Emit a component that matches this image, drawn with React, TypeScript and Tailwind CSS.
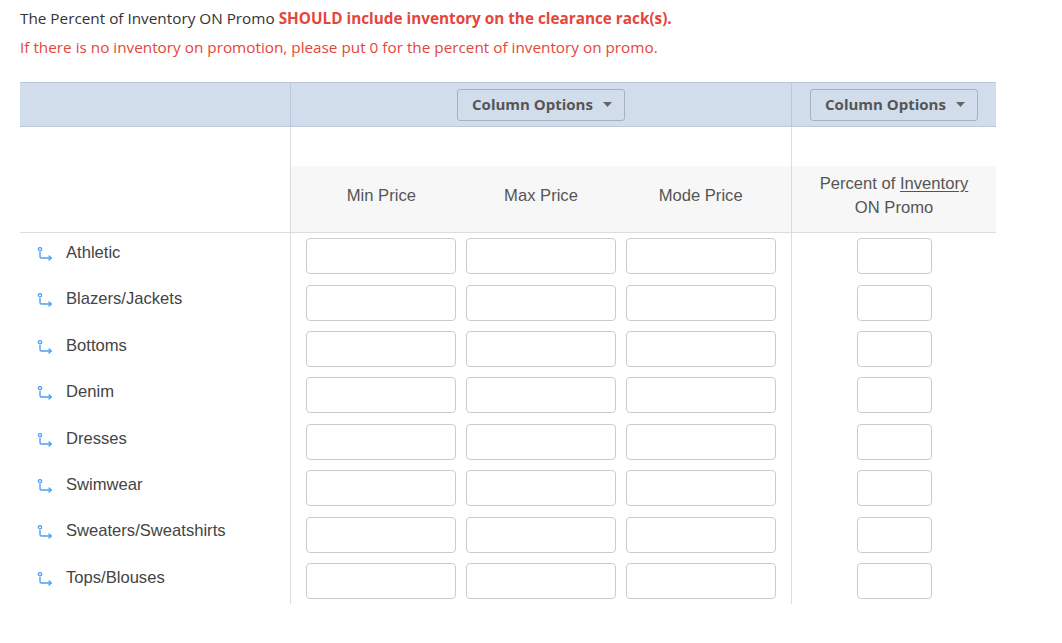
import React from "react";

const rows = [
  "Athletic",
  "Blazers/Jackets",
  "Bottoms",
  "Denim",
  "Dresses",
  "Swimwear",
  "Sweaters/Sweatshirts",
  "Tops/Blouses",
];

function SubIcon() {
  return (
    <svg width="16" height="14" viewBox="0 0 16 14" fill="none" className="shrink-0">
      <circle cx="3" cy="2.2" r="1.6" stroke="#4a9ff5" strokeWidth="1.3" />
      <path d="M3 5.5 V9.5 Q3 11 4.5 11 H14" stroke="#4a9ff5" strokeWidth="1.4" strokeLinecap="round" />
      <path d="M12 9 L14.2 11 L12 13" stroke="#4a9ff5" strokeWidth="1.4" strokeLinecap="round" strokeLinejoin="round" />
    </svg>
  );
}

function ColBtn() {
  return (
    <button className="flex h-[32px] w-[168px] items-center justify-center gap-[10px] rounded-[3px] border border-[#a8b2bf] bg-[#d2ddec] pl-[2px] text-[15px] font-bold text-[#555555] [font-family:'Open_Sans',sans-serif]">
      <span>Column Options</span>
      <svg width="9" height="5" viewBox="0 0 9 5"><path d="M0 0 H9 L4.5 5 Z" fill="#666" /></svg>
    </button>
  );
}

function Box({ w }: { w: string }) {
  return <div className={`h-[36px] ${w} rounded-[4px] border border-[#cccccc] bg-white`} />;
}

export default function App() {
  return (
    <div className="min-h-screen bg-white pt-[8px] [font-family:'Liberation_Sans',Arial,sans-serif]">
      <div className="pl-[20px] [font-family:'Open_Sans',sans-serif] text-[15.3px]">
        <p className="leading-[21px] text-[#333333]">
          The Percent of Inventory ON Promo{" "}
          <span className="font-bold text-[#e5463b]">SHOULD include inventory on the clearance rack(s).</span>
        </p>
        <p className="mt-[8px] leading-[21px] text-[#e5463b]">
          If there is no inventory on promotion, please put 0 for the percent of inventory on promo.
        </p>
      </div>

      <div className="ml-[20px] mt-[24px] w-[976px]">
        {/* header band */}
        <div className="grid h-[45px] grid-cols-[270px_501px_205px] border-y border-[#b9c8dc] bg-[#d2ddec]">
          <div />
          <div className="flex items-center justify-center border-l border-[#b9c8dc]">
            <ColBtn />
          </div>
          <div className="flex items-center justify-center border-l border-[#b9c8dc]">
            <ColBtn />
          </div>
        </div>

        {/* column headers */}
        <div className="grid grid-cols-[270px_501px_205px] border-b border-[#dddddd]">
          <div />
          <div className="border-l border-[#dddddd]">
            <div className="h-[39px]" />
            <div className="grid h-[66px] grid-cols-3 bg-[#f7f7f7] px-[10.5px] pb-[6px] text-[16.6px] text-[#555555]">
              <div className="flex items-center justify-center">Min Price</div>
              <div className="flex items-center justify-center">Max Price</div>
              <div className="flex items-center justify-center">Mode Price</div>
            </div>
          </div>
          <div className="border-l border-[#dddddd]">
            <div className="h-[39px]" />
            <div className="flex h-[66px] flex-col items-center justify-center bg-[#f7f7f7] pb-[6px] text-center text-[16.6px] leading-[24px] text-[#555555]">
              <div>
                Percent of <span className="underline underline-offset-2">Inventory</span>
              </div>
              <div>ON Promo</div>
            </div>
          </div>
        </div>

        {/* rows */}
        <div className="grid grid-cols-[270px_501px_205px]">
          <div>
            {rows.map((r) => (
              <div key={r} className="flex h-[46.4px] items-start gap-[13px] pl-[17px] pt-[10px]">
                <div className="pt-[4px]">
                  <SubIcon />
                </div>
                <span className="text-[16.6px] leading-[20px] text-[#444444]">{r}</span>
              </div>
            ))}
          </div>
          <div className="border-l border-[#dddddd] px-[10.5px]">
            {rows.map((r) => (
              <div key={r} className="grid h-[46.4px] grid-cols-3 py-[5.2px]">
                <div className="flex justify-center"><Box w="w-[150px]" /></div>
                <div className="flex justify-center"><Box w="w-[150px]" /></div>
                <div className="flex justify-center"><Box w="w-[150px]" /></div>
              </div>
            ))}
          </div>
          <div className="border-l border-[#dddddd]">
            {rows.map((r) => (
              <div key={r} className="flex h-[46.4px] justify-center py-[5.2px]">
                <Box w="w-[75px]" />
              </div>
            ))}
          </div>
        </div>
      </div>
    </div>
  );
}
